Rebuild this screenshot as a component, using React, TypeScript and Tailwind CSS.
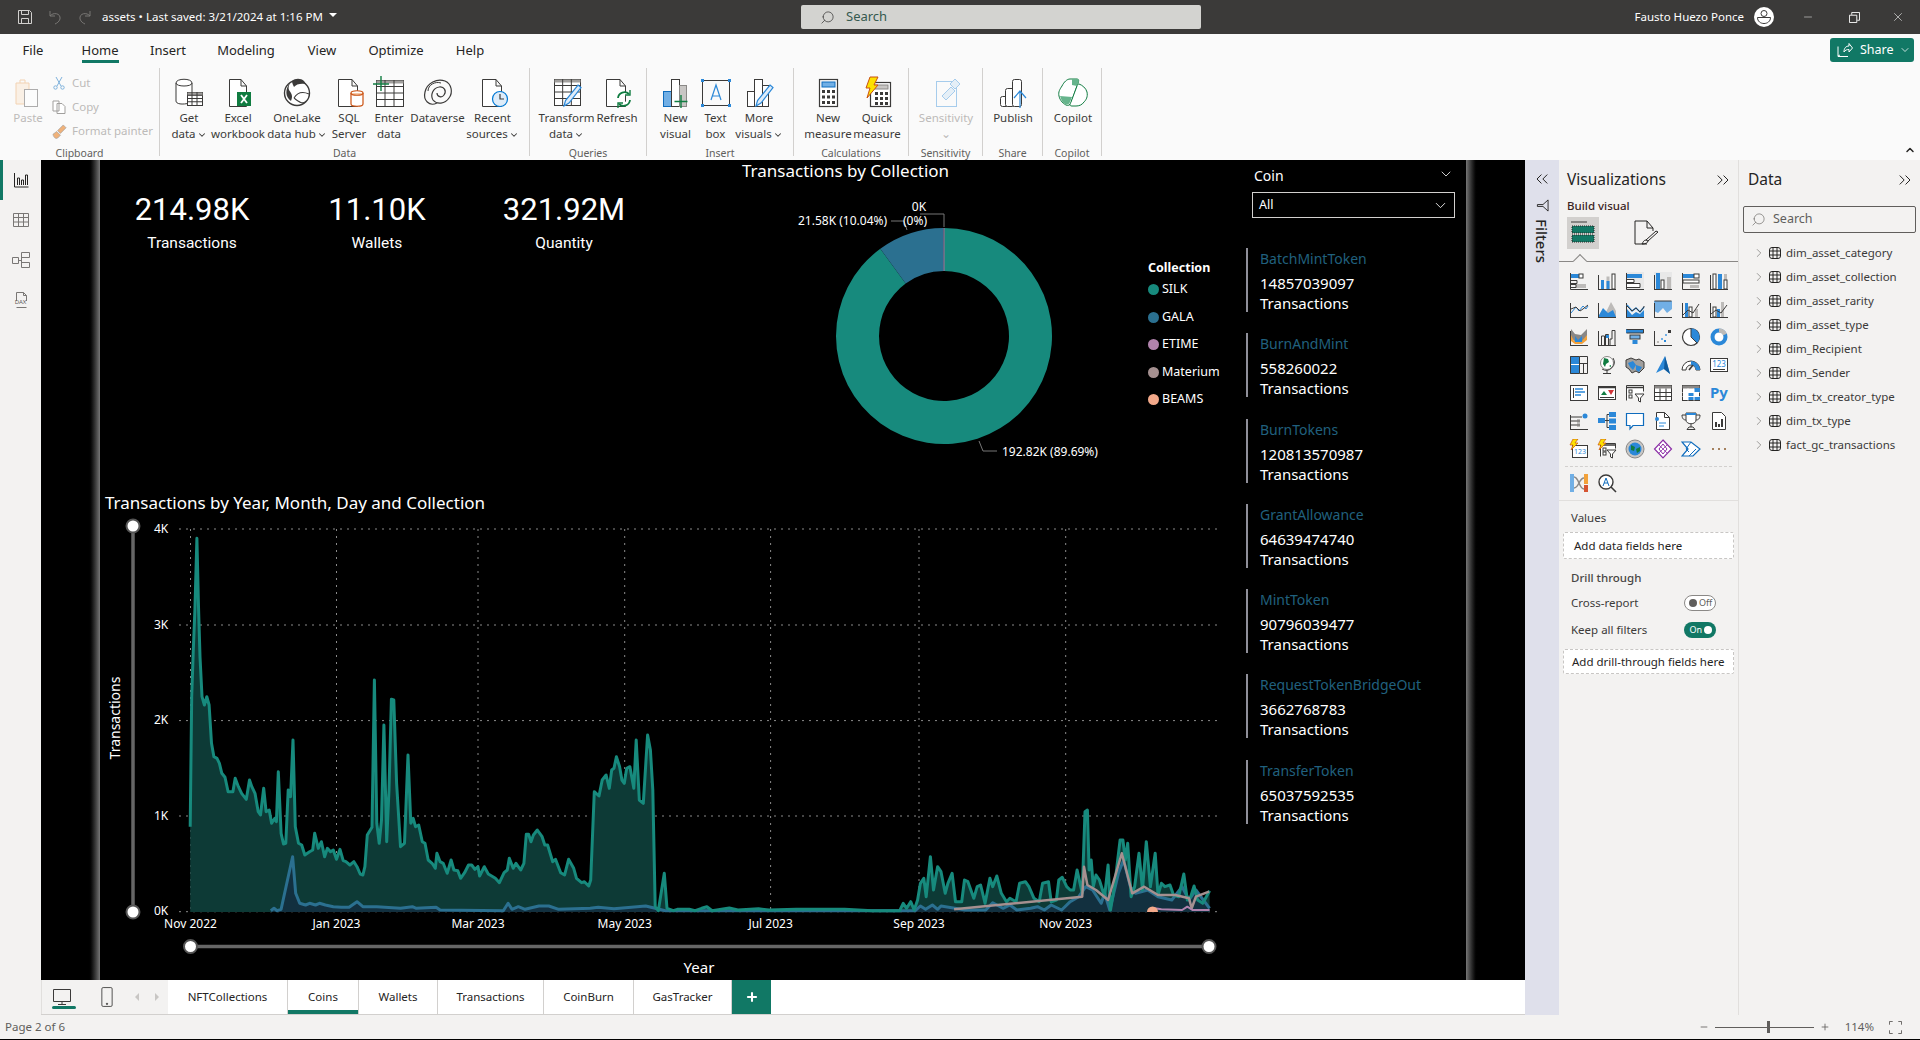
import React from "react";
import {
  ChevronDown,
  ChevronRight,
  ChevronUp,
  ChevronsLeft,
  ChevronsRight,
  Minus,
  Plus,
  Search,
  X,
} from "lucide-react";

type Pt = [number, number];

// traced from the report, page coordinates after conversion
const a = (p: number[]): Pt[] => {
  const out: Pt[] = [];
  for (let i = 0; i < p.length; i += 2) out.push([100 + p[i] / 2.529, 490 + p[i + 1] / 3]);
  return out;
};
const b = (p: number[]): Pt[] => {
  const out: Pt[] = [];
  for (let i = 0; i < p.length; i += 2) out.push([700 + p[i] / 2.904, 600 + p[i + 1] / 3]);
  return out;
};
const str = (p: Pt[]) => p.map((q) => `${q[0].toFixed(1)},${q[1].toFixed(1)}`).join(" ");
const area = (p: Pt[]) => `${p[0][0].toFixed(1)},912 ${str(p)} ${p[p.length - 1][0].toFixed(1)},912`;

const silk: Pt[] = [
  ...a([
    228, 1010, 232, 620, 236, 480, 240, 360, 245, 145, 249, 350, 253, 500, 258, 620, 264, 645, 270, 620, 276, 645, 282,
    760, 288, 800, 296, 805, 302, 820, 308, 850, 316, 862, 324, 905, 336, 905, 342, 865, 350, 890, 358, 910, 370, 928,
    378, 870, 384, 890, 392, 910, 400, 965, 406, 975, 414, 895, 420, 965, 428, 960, 434, 1000, 442, 985, 446, 995, 451,
    845, 458, 1030, 464, 1062, 470, 1060, 476, 900, 482, 920, 488, 750, 494, 1010, 502, 1060, 510, 1065, 518, 1095, 530,
    1085, 538, 1080, 543, 1030, 552, 1075, 560, 1055, 568, 1100, 575, 1075, 583, 1085, 590, 1080, 598, 1108, 607, 1078,
    615, 1112, 622, 1115, 632, 1125, 642, 1115, 650, 1130, 658, 1152, 665, 1155, 670, 1130, 676, 1035, 688, 1012, 694,
    570, 700, 1000, 706, 1060, 712, 990, 718, 705, 725, 1055, 731, 900, 737, 628, 743, 630, 750, 880, 760, 1070, 770,
    1060, 779, 795, 786, 1000, 792, 985, 798, 1010, 806, 1005, 815, 1055, 822, 1060, 830, 1110, 840, 1120, 848, 1135,
    852, 1090, 860, 1115, 868, 1120, 878, 1150, 888, 1110, 895, 1140, 905, 1142, 912, 1165, 922, 1148, 932, 1125, 940,
    1125, 948, 1138, 956, 1130, 960, 1158, 972, 1130, 982, 1152, 1000, 1165, 1010, 1178, 1022, 1148, 1030, 1140, 1035,
    1105, 1045, 1135, 1052, 1120, 1064, 1140, 1072, 1120, 1078, 1033, 1084, 1033, 1090, 1055, 1096, 1035, 1106, 1020,
    1118, 1040, 1125, 1065, 1132, 1065, 1145, 1115, 1152, 1108, 1165, 1148, 1175, 1155, 1185, 1108, 1198, 1135, 1205,
    1165, 1218, 1178, 1225, 1175, 1236, 1188, 1241, 1170, 1250, 905, 1262, 918, 1270, 870, 1280, 855, 1288, 895, 1294,
    840, 1300, 835, 1306, 800, 1314, 830, 1320, 870, 1326, 880, 1332, 835, 1340, 830, 1350, 895, 1356, 750, 1364, 930,
    1374, 940, 1385, 735, 1392, 780, 1398, 900, 1404, 1250, 1412, 1262, 1427, 1150, 1434, 1255, 1450, 1262, 1460, 1258,
    1490, 1258, 1505, 1262,
  ]),
  ...b([
    5, 925, 20, 920, 35, 932, 85, 924, 110, 930, 170, 926, 200, 930, 280, 928, 340, 928, 420, 928, 500, 932, 580, 932,
    590, 910, 600, 925, 612, 905, 622, 930, 632, 900, 640, 850, 650, 835, 657, 890, 669, 770, 678, 870, 690, 800, 700,
    815, 712, 880, 720, 850, 732, 820, 742, 905, 760, 905, 768, 840, 778, 845, 795, 895, 805, 860, 815, 855, 828, 910,
    842, 835, 850, 860, 862, 828, 875, 880, 890, 905, 900, 895, 918, 905, 928, 850, 945, 845, 955, 860, 970, 895, 985,
    905, 995, 850, 1012, 845, 1020, 905, 1035, 900, 1042, 840, 1052, 832, 1065, 860, 1075, 870, 1085, 870, 1095, 810,
    1110, 880, 1118, 635, 1125, 630, 1130, 810, 1136, 780, 1142, 860, 1150, 825, 1160, 840, 1175, 890, 1185, 795, 1192,
    930, 1205, 850, 1220, 720, 1228, 720, 1235, 780, 1242, 730, 1252, 890, 1262, 860, 1275, 760, 1285, 870, 1296, 725,
    1308, 860, 1322, 760, 1330, 885, 1340, 850, 1350, 860, 1365, 855, 1375, 885, 1390, 890, 1405, 822, 1415, 900, 1425,
    890, 1435, 858, 1445, 900, 1460, 910, 1480, 872,
  ]),
];

const gala: Pt[] = [
  ...a([
    432, 1262, 440, 1255, 448, 1262, 458, 1258, 487, 1100, 495, 1210, 505, 1240, 520, 1245, 530, 1240, 545, 1245, 555,
    1240, 570, 1245, 590, 1250, 610, 1252, 630, 1252, 650, 1235, 665, 1250, 700, 1250, 760, 1255, 790, 1250, 800, 1255,
    850, 1252, 860, 1260, 1020, 1262, 1032, 1240, 1042, 1258, 1058, 1250, 1075, 1258, 1110, 1248, 1135, 1248, 1160, 1258,
    1240, 1255, 1260, 1252, 1300, 1256, 1380, 1248, 1404, 1255, 1430, 1262,
  ]),
  ...b([
    625, 932, 640, 918, 655, 928, 675, 915, 690, 928, 700, 918, 740, 925, 770, 930, 830, 930, 850, 908, 880, 925, 900,
    915, 920, 930, 960, 925, 980, 920, 1000, 930, 1020, 915, 1050, 930, 1075, 905, 1100, 890, 1120, 860, 1140, 870, 1165,
    910, 1175, 880, 1190, 930, 1215, 820, 1230, 780, 1250, 860, 1265, 880, 1300, 870, 1330, 890, 1370, 900, 1400, 860,
    1420, 900, 1440, 870, 1480, 925,
  ]),
];

const materium = b([
  738, 928, 1110, 890, 1115, 800, 1125, 855, 1150, 870, 1185, 900, 1225, 760, 1255, 880, 1290, 860, 1330, 885, 1380, 885,
  1420, 895, 1428, 925, 1440, 890, 1478, 875,
]);
const etime = b([1320, 925, 1340, 928, 1400, 930, 1415, 920, 1430, 930, 1480, 930]);

const Ink = "#3b3a39";

const Ic32 = ({ children, faded }: { children: React.ReactNode; faded?: boolean }) => (
  <svg
    viewBox="0 0 32 32"
    className={faded ? "w-[32px] h-[32px] opacity-40" : "w-[32px] h-[32px]"}
    fill="none"
    stroke={Ink}
    strokeWidth="1"
  >
    {children}
  </svg>
);

const Doc = ({ x = 8, w = 16 }: { x?: number; w?: number }) => (
  <path d={`M${x + 0.5} 30.5V3.5H${x + w - 6}L${x + w - 0.5} 10V30.5Z M${x + w - 6} 3.5V10H${x + w - 0.5}`} fill="#fff" />
);

const Grid3 = ({ x, y, w, h, head }: { x: number; y: number; w: number; h: number; head?: boolean }) => (
  <g>
    <rect x={x + 0.5} y={y + 0.5} width={w} height={h} fill="#fff" />
    {head && <rect x={x + 0.5} y={y + 0.5} width={w} height={3} fill="#a19f9d" stroke="none" />}
    {[1, 2, 3].map((i) => (
      <line key={"h" + i} x1={x} x2={x + w} y1={y + (h * i) / 4} y2={y + (h * i) / 4} />
    ))}
    {[1, 2].map((i) => (
      <line key={"v" + i} y1={y} y2={y + h} x1={x + (w * i) / 3} x2={x + (w * i) / 3} />
    ))}
  </g>
);

const Pencil = () => (
  <path d="M27 9l3 2.5L18 27l-5 3 1.5-5.5Z" fill="#deecf9" stroke="#2b88d8" strokeWidth="1.2" />
);

const GetDataIcon = () => (
  <Ic32>
    <path d="M3 7c0-5 16-5 16 0v20h-2c-8 2-14 1-14-2Z" fill="#fff" />
    <path d="M3 7c0 4 16 4 16 0" />
    <Grid3 x={14} y={16} w={15} h={13} head />
  </Ic32>
);
const ExcelIcon = () => (
  <Ic32>
    <Doc x={7} w={18} />
    <rect x="15" y="16" width="14" height="14" fill="#107c41" stroke="none" />
    <path d="M19 19l6 8M25 19l-6 8" stroke="#fff" strokeWidth="1.8" />
  </Ic32>
);
const OneLakeIcon = () => (
  <Ic32>
    <circle cx="16" cy="17" r="12.500" fill="#fff" strokeWidth="1.4" />
    <path d="M9 7c-5 6-5 14 1 18 2-5 1-7-2-11-1-2 0-5 1-7Z" fill="#3b3a39" stroke="none" />
    <path d="M11 5c3-3 9-3 12 0l2 3c-5-1-10 0-12 3-1-2-2-4-2-6Z" fill="#3b3a39" stroke="none" />
    <path d="M13 22c3-5 8-7 15-4M13 22c5 4 9 7 12 3" strokeWidth="1.1" />
  </Ic32>
);
const SqlIcon = () => (
  <Ic32>
    <Doc x={5} w={20} />
    <path d="M18 17c0-3 12-3 12 0v11c0 3-12 3-12 0Z" fill="#fff" stroke="#ca5010" strokeWidth="1.2" />
    <path d="M18 17c0 3 12 3 12 0" fill="#f7c8a5" stroke="#ca5010" strokeWidth="1.2" />
  </Ic32>
);
const EnterIcon = () => (
  <Ic32>
    <Grid3 x={3} y={4} w={27} h={26} head />
    <path d="M8 0v15M0 8h16" stroke="#107c41" strokeWidth="1.4" />
  </Ic32>
);
const DataverseIcon = () => (
  <Ic32>
    <path d="M15 27C7 31 1 24 3 16 5 7 15 2 23 5c7 3 8 12 4 17-4 6-12 7-16 2-3-5 0-12 6-13 5-1 8 4 5 8-2 3-7 2-7-2" strokeWidth="1.2" />
    <path d="M6 15c0-6 7-10 13-8" strokeWidth="1" />
  </Ic32>
);
const RecentIcon = () => (
  <Ic32>
    <Doc x={5} w={20} />
    <circle cx="23" cy="23" r="7.500" fill="#deecf9" stroke="#0078d4" strokeWidth="1.2" />
    <path d="M23 18v5h4" stroke={Ink} strokeWidth="1.2" />
  </Ic32>
);
const TransformIcon = () => (
  <Ic32>
    <Grid3 x={3} y={3} w={26} h={26} head />
    <Pencil />
  </Ic32>
);
const RefreshIcon = () => (
  <Ic32>
    <Doc x={5} w={20} />
    <path d="M17 22a6.500 6.500 0 0 1 11-4M29 24a6.500 6.500 0 0 1-11 4" stroke="#107c41" strokeWidth="1.800" fill="#fff" />
    <path d="M29 14v5h-5M17 32v-5h5" stroke="#107c41" strokeWidth="1.400" />
  </Ic32>
);
const NewVisualIcon = () => (
  <Ic32>
    <rect x="3.500" y="15.500" width="8" height="15" fill="#71afe5" stroke="#0f6cbd" />
    <rect x="11.500" y="3.500" width="8" height="27" fill="#fff" />
    <rect x="19.500" y="9.500" width="7" height="21" fill="#c8c6c4" stroke="#8a8886" />
    <path d="M21 19v13M14.500 25.500h13" stroke="#107c41" strokeWidth="1.400" />
  </Ic32>
);
const TextBoxIcon = () => (
  <Ic32>
    <rect x="2.500" y="4.500" width="27" height="25" />
    {[
      [2.5, 4.5],
      [29.5, 4.5],
      [2.5, 29.5],
      [29.5, 29.5],
    ].map(([x, y], i) => (
      <rect key={i} x={x - 1.5} y={y - 1.5} width="3" height="3" fill="#2b88d8" stroke="none" />
    ))}
    <path d="M11 24l5-15 5 15M12.500 20h7" stroke="#2b88d8" strokeWidth="1.200" />
  </Ic32>
);
const MoreVisualsIcon = () => (
  <Ic32>
    <rect x="4.500" y="15.500" width="7" height="15" fill="#fff" />
    <rect x="11.500" y="3.500" width="8" height="27" fill="#fff" />
    <rect x="19.500" y="9.500" width="6" height="21" fill="#fff" />
    <Pencil />
  </Ic32>
);
const Calculator = ({ x }: { x: number }) => (
  <g>
    <rect x={x + 0.5} y="3.500" width="18" height="27" fill="#fff" strokeWidth="1.200" />
    <rect x={x + 3} y="6" width="13" height="5" fill="#71afe5" stroke="#0f6cbd" />
    {[0, 1, 2].map((r) =>
      [0, 1, 2].map((c) => (
        <rect key={`${r}${c}`} x={x + 3 + c * 5} y={14 + r * 5.5} width="3" height="3" fill="#3b3a39" stroke="none" />
      )),
    )}
  </g>
);
const NewMeasureIcon = () => (
  <Ic32>
    <Calculator x={7} />
  </Ic32>
);
const QuickMeasureIcon = () => (
  <Ic32>
    <rect x="9.500" y="6.500" width="20" height="24" fill="#fff" strokeWidth="1.200" />
    <rect x="14" y="9" width="13" height="4" fill="#c8c6c4" stroke="#8a8886" />
    {[0, 1, 2].map((r) =>
      [0, 1, 2].map((c) => (
        <rect key={`${r}${c}`} x={14 + c * 5} y={16 + r * 5} width="3" height="3" fill="#3b3a39" stroke="none" />
      )),
    )}
    <path d="M9 1h8l-4 8h4L6 22l3-10H5Z" fill="#fce100" stroke="#ca5010" />
  </Ic32>
);
const SensitivityIcon = () => (
  <Ic32 faded>
    <rect x="6.500" y="5.500" width="20" height="25" stroke="#2b88d8" />
    <path d="M12 20l9-9 4 4-9 9Z" fill="#c7e0f4" stroke="#2b88d8" />
    <path d="M20 8l5-5 5 5-5 5Z" fill="#c7e0f4" stroke="#2b88d8" />
  </Ic32>
);
const PublishIcon = () => (
  <Ic32>
    <rect x="3.500" y="20.500" width="8" height="10" rx="2" fill="#fff" />
    <rect x="8.500" y="12.500" width="9" height="18" rx="2" fill="#fff" />
    <rect x="15.500" y="3.500" width="9" height="27" rx="2" fill="#fff" />
    <path d="M23 32V15M17 22l6-7 6 7" stroke="#2b88d8" strokeWidth="1.200" fill="none" />
  </Ic32>
);
const CopilotIcon = () => (
  <Ic32>
    <path d="M13 3h7c2 0 2 2 1 4l-7 20c-1 2-3 3-5 2-2-1-6-4-7-9-1-4 1-7 3-10 2-4 5-7 8-7Z" fill="#fff" stroke="#107c41" />
    <path d="M22 8c3 1 7 4 8 8 1 5-1 8-3 10-2 3-5 4-8 4h-4c-3 0-2-2-1-4l6-16c0-1 1-2 2-2Z" fill="#fff" stroke="#107c41" />
    <path d="M15 3h5c2 0 2 2 1 4l-1 3-5-1Z" fill="#66b48c" stroke="none" />
    <path d="M3 20l12 1-2 5c-1 3-4 3-5 2-2-1-4-4-5-8Z" fill="#66b48c" stroke="none" />
  </Ic32>
);

const RibbonBtn = ({
  w,
  icon,
  lines,
  caret,
  muted,
}: {
  w: string;
  icon: React.ReactNode;
  lines: string[];
  caret?: boolean;
  muted?: boolean;
}) => (
  <div className={`${w} flex flex-col items-center pt-[8px] shrink-0`}>
    <div className="h-[32px] mb-[2px] flex items-center justify-center">{icon}</div>
    {lines.map((l, i) => (
      <div key={i} className={`leading-[16px] whitespace-nowrap ${muted ? "text-[#bdbbb9]" : "text-[#3b3a39]"}`}>
        {l}
        {caret && i === lines.length - 1 && <ChevronDown className="inline w-[10px] h-[10px] ml-[1px]" strokeWidth={2.5} />}
      </div>
    ))}
  </div>
);

const Group = ({
  width,
  pad,
  label,
  children,
}: {
  width: string;
  pad: string;
  label: string;
  children: React.ReactNode;
}) => (
  <div className={`${width} shrink-0 flex flex-col border-r border-[#d2d0ce] h-[88px]`}>
    <div className={`${pad} flex h-[78px] shrink-0`}>{children}</div>
    <div className="h-[10px] text-center text-[10.5px] leading-[14px] text-[#605e5c] whitespace-nowrap">{label}</div>
  </div>
);

// visualization gallery, 20px drawings
const S = ({ children }: { children: React.ReactNode }) => (
  <svg viewBox="0 0 20 20" className="w-[20px] h-[20px]" fill="none" stroke={Ink} strokeWidth="1">
    {children}
  </svg>
);
const B = "#2b88d8";
const G = "#bdbbb9";
const axisL = <path d="M1.500 2v16.500H19" />;
const axisB = <path d="M1 18.500h18M1.500 4v14.500" />;

const gallery: React.ReactNode[] = [
  <S key="1">
    {axisL}
    <rect x="2" y="3" width="8" height="4" fill={B} stroke="none" />
    <rect x="10" y="3" width="4" height="4" fill="#fff" stroke={Ink} />
    <path d="M2 9.500h6v3H2" />
    <rect x="7" y="13" width="10" height="4" fill={G} stroke="none" />
    <path d="M2 13.500h5v3H2" />
  </S>,
  <S key="2">
    {axisB}
    <rect x="4" y="9" width="3" height="9" fill={B} stroke="none" />
    <rect x="9.500" y="5.500" width="3" height="12.500" fill={G} stroke="none" />
    <rect x="15" y="3" width="3" height="15" fill="#fff" stroke={Ink} />
    <rect x="9.500" y="10" width="3" height="8" fill={B} stroke="none" />
  </S>,
  <S key="3">
    <rect x="1" y="1" width="18" height="18" fill="#e8e8e8" stroke="none" />
    <rect x="2" y="3" width="15" height="4" fill={B} stroke="none" />
    <path d="M2 8.500h7v3H2M2 12.500h13v4H2" fill="#fff" />
    {axisL}
  </S>,
  <S key="4">
    <rect x="1" y="1" width="18" height="18" fill="#e8e8e8" stroke="none" />
    <rect x="3" y="2" width="4" height="16" fill={B} stroke="none" />
    <rect x="8" y="9" width="3" height="9" fill="#fff" stroke={Ink} />
    <rect x="14" y="6" width="4" height="12" fill={G} stroke="none" />
    {axisB}
  </S>,
  <S key="5">
    {axisL}
    <rect x="2" y="3" width="11" height="4" fill={B} stroke="none" />
    <rect x="13" y="3" width="5" height="4" fill="#fff" stroke={Ink} />
    <rect x="2" y="9" width="16" height="3" fill="#fff" stroke={Ink} />
    <rect x="9" y="14" width="9" height="3" fill={G} stroke="none" />
  </S>,
  <S key="6">
    {axisB}
    <rect x="4" y="3" width="3" height="15" fill="#fff" stroke={Ink} />
    <rect x="9" y="3" width="4" height="15" fill={B} stroke="none" />
    <rect x="15" y="3" width="3" height="6" fill={G} stroke="none" />
    <rect x="15" y="9" width="3" height="9" fill="#fff" stroke={Ink} />
  </S>,
  <S key="7">
    {axisB}
    <path d="M2 14l5-6 3 4 4-5 3 3 2-3" stroke={B} />
    <path d="M2 10l5-2 4 4 3-2 5-4" />
  </S>,
  <S key="8">
    <path d="M1 18l5-8 3 3 5-10 5 9v6Z" fill={G} stroke="none" />
    <path d="M1 18l5-9 5 5 5-3 3 7Z" fill={B} stroke="none" />
    {axisB}
  </S>,
  <S key="9">
    {axisB}
    <path d="M2 6l5 6 4-3 4 4 4-5" stroke={B} strokeWidth="1.400" />
    <path d="M2 10l5 6 4-3 4 2 4-4v7H2Z" fill={B} stroke="none" />
    <path d="M2 7l5 5 4-3 4 4 4-5v-1" fill="none" stroke={Ink} />
  </S>,
  <S key="10">
    <path d="M1 2h18v8l-5 4-4-5-5 5-4-2Z" fill="#71afe5" stroke="none" />
    <path d="M1.500 2h17" stroke={Ink} />
    {axisB}
  </S>,
  <S key="11">
    {axisB}
    <rect x="4" y="4" width="3" height="14" fill={B} stroke="none" />
    <rect x="8" y="8" width="3" height="10" fill="#fff" stroke={Ink} />
    <rect x="14" y="10" width="3" height="8" fill={G} stroke="none" />
    <path d="M2 16l5-5 5 3 6-9" />
  </S>,
  <S key="12">
    {axisB}
    <rect x="4" y="8" width="3" height="10" fill="#fff" stroke={Ink} />
    <rect x="8" y="10" width="3" height="8" fill={B} stroke="none" />
    <rect x="12" y="3" width="3" height="15" fill={G} stroke="none" />
    <path d="M2 15l5-4 5 3 6-8" />
  </S>,
  <S key="13">
    <path d="M2 2l4 5 6 1 6-6v8l-4 5-6 1-6-5Z" fill="#8a8886" stroke="none" />
    <path d="M2 8l3 6h8l5-6v5l-5 4H6l-4-3Z" fill="#f2a13a" stroke="none" />
    <path d="M6 9l3 4 4-4v6H6Z" fill={B} stroke="none" />
    {axisB}
  </S>,
  <S key="14">
    {axisB}
    <path d="M4.500 18v-9h3v9M8.500 18V7.500h3v10.500M13 18V12h2V3.500h3V18" />
    <rect x="9" y="8" width="3" height="3" fill={B} stroke="none" />
  </S>,
  <S key="15">
    <rect x="1" y="2" width="18" height="4" fill={B} stroke="none" />
    <path d="M1.500 2.500h17v3.500h-17" />
    <rect x="5" y="8" width="10" height="4" fill="#71afe5" stroke={Ink} />
    <rect x="7.500" y="13" width="5" height="4" fill={B} stroke="none" />
  </S>,
  <S key="16">
    {axisB}
    <rect x="4" y="14" width="2" height="2" fill={G} stroke="none" />
    <rect x="8" y="11" width="2" height="2" fill="#71afe5" stroke="none" />
    <rect x="11" y="13" width="2" height="2" fill={B} stroke="none" />
    <rect x="12" y="7" width="2" height="2" fill="#71afe5" stroke="none" />
    <rect x="15" y="3" width="3" height="3" fill={Ink} stroke="none" />
  </S>,
  <S key="17">
    <circle cx="10" cy="10" r="8.500" fill="#fff" strokeWidth="1.200" />
    <path d="M10 10V1.500a8.500 8.500 0 0 1 6 14.500Z" fill={B} stroke="none" />
    <path d="M10 1.500V10l6 6" />
  </S>,
  <S key="18">
    <circle cx="10" cy="10" r="6.500" stroke={B} strokeWidth="4" />
    <path d="M10 3.500a6.500 6.500 0 0 1 6 4" stroke={G} strokeWidth="4" />
    <circle cx="10" cy="10" r="4" fill="#fff" stroke="none" />
  </S>,
  <S key="19">
    <rect x="1" y="1" width="9" height="18" fill={B} stroke="none" />
    <rect x="1" y="9" width="9" height="1" fill="#fff" stroke="none" />
    <path d="M10.500 1.500h8v17h-8M10.500 8.500h8M14.500 8.500v10" />
    <path d="M1.500 1.500h9v17h-9Z" />
  </S>,
  <S key="20">
    <circle cx="10" cy="8" r="6.500" fill="#fff" stroke="#8a8886" />
    <path d="M7 3l4 1 1 3-3 2-1 3-2-3ZM12 11l2-1v2Z" fill="#107c41" stroke="none" />
    <path d="M16 3a8 8 0 0 1-11 11M10 15v3M6 18.500h8" />
  </S>,
  <S key="21">
    <path d="M1 5l5-2 5 2 3-1 5 3v6l-5 5-3-2-4 2-3-4-3-2Z" fill="#a19f9d" stroke={Ink} />
    <path d="M3 8l5-2 3 4-3 5-3-3Z" fill={B} stroke="none" />
    <path d="M11 10l6 2-3 5-3-2Z" fill={B} stroke="none" />
  </S>,
  <S key="22">
    <path d="M12 1l5 18-6-5-8 4Z" fill="#2b88d8" stroke="none" />
    <path d="M12 1l-1 13 6 5Z" fill="#0f5a9c" stroke="none" />
  </S>,
  <S key="23">
    <path d="M1 15a9 9 0 0 1 18 0h-4a5 5 0 0 0-10 0Z" fill="#fff" />
    <path d="M10 6a9 9 0 0 1 9 9h-4a5 5 0 0 0-5-5Z" fill={B} stroke="none" />
    <path d="M8 15l4-5" strokeWidth="1.600" />
  </S>,
  <S key="24">
    <rect x="1.500" y="3.500" width="17" height="13" fill="#fff" />
    <path d="M4 14.500h12" />
    <text x="10" y="12" textAnchor="middle" fontSize="8" fill={B} stroke="none">
      123
    </text>
  </S>,
  <S key="25">
    <rect x="1.500" y="2.500" width="17" height="15" fill="#fff" />
    <path d="M4.500 5v10" />
    <path d="M6 6h8M6 9h10M6 12h6" stroke={B} strokeWidth="1.400" />
  </S>,
  <S key="26">
    <rect x="1.500" y="3.500" width="17" height="13" fill="#fff" />
    <path d="M1 4.500h18" strokeWidth="1.500" />
    <path d="M4 12l3-4 3 4Z" fill="#107c41" stroke="none" />
    <path d="M11 7h6l-3 5Z" fill="#d13438" stroke="none" />
    <path d="M3 14.500h14" />
  </S>,
  <S key="27">
    <path d="M1.500 17.500v-15h17v6" fill="#fff" />
    <path d="M1 4.500h18" strokeWidth="1.500" />
    <rect x="4" y="7" width="3" height="3" fill="#fff" />
    <rect x="4" y="12" width="3" height="3" fill="#fff" />
    <path d="M10 11h9l-3.500 4v4l-2-1v-3Z" fill="#fff" />
  </S>,
  <S key="28">
    <rect x="1.500" y="2.500" width="17" height="15" fill="#fff" />
    <rect x="1.500" y="2.500" width="17" height="3" fill="#8a8886" stroke="none" />
    <path d="M1.500 9.500h17M1.500 13.500h17M7 5.500v12M13 5.500v12" />
  </S>,
  <S key="29">
    <rect x="1.500" y="2.500" width="17" height="15" fill="#fff" />
    <rect x="1.500" y="2.500" width="17" height="3" fill="#8a8886" stroke="none" />
    <rect x="7" y="9" width="6" height="4" fill={B} stroke="none" />
    <rect x="13" y="5" width="6" height="4" fill={B} stroke="none" />
    <rect x="7" y="13" width="12" height="4" fill={B} stroke="none" />
    <path d="M1.500 9.500h17M1.500 13.500h17M7 5.500v12M13 5.500v12" stroke="#fff" />
  </S>,
  <S key="30">
    <text x="10" y="15" textAnchor="middle" fontSize="15" fontWeight="700" fill="#2b88d8" stroke="none">
      Py
    </text>
  </S>,
  <S key="31">
    {axisB}
    <path d="M2 6h11M2 10h6M2 14h6" />
    <circle cx="16" cy="5" r="2.500" fill={B} stroke="none" />
    <rect x="8" y="8.500" width="3" height="3" fill="#8a8886" stroke="none" />
    <rect x="8" y="12.500" width="3" height="3" fill="#8a8886" stroke="none" />
  </S>,
  <S key="32">
    <rect x="1" y="7" width="7" height="5" fill={B} stroke="none" />
    <rect x="12" y="1" width="7" height="5" fill={B} stroke="none" />
    <rect x="12" y="7.500" width="7" height="5" fill={B} stroke="none" />
    <rect x="12" y="14" width="7" height="5" fill={B} stroke="none" />
    <path d="M8 9.500h4M10 3.500v13M10 3.500h2M10 16.500h2" />
  </S>,
  <S key="33">
    <path d="M1.500 2.500h17v12H8l-3 3.500v-3.500H1.500Z" fill="#fff" stroke="#0f6cbd" strokeWidth="1.200" />
  </S>,
  <S key="34">
    <path d="M3.500 1.500h8l5 5v12h-13Z" fill="#fff" />
    <path d="M11.500 1.500v5h5" />
    <circle cx="4" cy="8" r="2" fill={B} stroke="none" />
    <path d="M6 12h7M6 15h5" stroke={B} />
  </S>,
  <S key="35">
    <path d="M5 2h10v7c0 5-10 5-10 0Z" fill="#fff" />
    <rect x="5" y="2" width="10" height="2" fill={B} stroke="none" />
    <path d="M5 4H1c0 4 2 5 4 5M15 4h4c0 4-2 5-4 5M10 13v3M6 18.500h8l-2-2.500H8Z" />
  </S>,
  <S key="36">
    <path d="M3.500 1.500h9l4 4v13h-13Z" fill="#fff" />
    <rect x="6" y="11" width="2" height="5" fill="#3b3a39" stroke="none" />
    <rect x="9" y="13" width="2" height="3" fill="#3b3a39" stroke="none" />
    <rect x="12" y="8" width="2" height="8" fill="#3b3a39" stroke="none" />
  </S>,
  <S key="37">
    <rect x="3.500" y="6.500" width="15" height="12" fill="#fff" />
    <text x="11" y="15" textAnchor="middle" fontSize="7" fill={B} stroke="none">
      123
    </text>
    <path d="M4 0h5L6 4h3L2 11l2-5H1Z" fill="#fce100" stroke="#ca5010" strokeWidth="0.700" />
  </S>,
  <S key="38">
    <path d="M3.500 17.500V4.500h15v5" fill="#fff" />
    <path d="M3 6h16" strokeWidth="1.500" />
    <rect x="6" y="9" width="3" height="3" fill="#fff" />
    <rect x="6" y="13" width="3" height="3" fill="#fff" />
    <path d="M10 11h9l-3.500 4v4l-2-1v-3Z" fill="#fff" />
    <path d="M4 0h5L6 4h3L2 11l2-5H1Z" fill="#fce100" stroke="#ca5010" strokeWidth="0.700" />
  </S>,
  <S key="39">
    <circle cx="10" cy="10" r="9" fill="#c8c6c4" stroke="#8a8886" />
    <circle cx="10" cy="10" r="6.500" fill="#2b88d8" stroke="none" />
    <path d="M6 6l4 2-1 4-3-1ZM11 10l4-2 0 4-3 2Z" fill="#107c41" stroke="none" />
  </S>,
  <S key="40">
    <path d="M10 1l8.500 9-8.500 9-8.500-9Z" fill="#fff" stroke="#8a2da5" strokeWidth="1.200" />
    <path d="M10 5l4 5-4 5-4-5Z" fill="#fff" stroke="#8a2da5" />
    <path d="M6 6l8 8M14 6l-8 8" stroke="#8a2da5" strokeWidth="0.800" />
  </S>,
  <S key="41">
    <path d="M1 3h9l9 7-7 7H1l6-7Z" fill="#fff" stroke="#0f6cbd" strokeWidth="1.200" />
    <path d="M10 3l-5 7 3 3M15 10l-7 7" stroke="#0f6cbd" />
  </S>,
  <S key="42">
    <circle cx="4" cy="10" r="1" fill="#8a5a2b" stroke="none" />
    <circle cx="10" cy="10" r="1" fill="#8a5a2b" stroke="none" />
    <circle cx="16" cy="10" r="1" fill="#8a5a2b" stroke="none" />
  </S>,
];

const Dashed = ({ children, pl }: { children: string; pl: string }) => (
  <div
    className={`mx-[4px] bg-white border border-dashed border-[#c8c6c4] rounded-[2px] ${pl} whitespace-nowrap text-[#252423] text-[11.5px] flex items-center`}
  >
    {children}
  </div>
);

const fields = [
  "dim_asset_category",
  "dim_asset_collection",
  "dim_asset_rarity",
  "dim_asset_type",
  "dim_Recipient",
  "dim_Sender",
  "dim_tx_creator_type",
  "dim_tx_type",
  "fact_gc_transactions",
];

const cards = [
  ["BatchMintToken", "14857039097"],
  ["BurnAndMint", "558260022"],
  ["BurnTokens", "120813570987"],
  ["GrantAllowance", "64639474740"],
  ["MintToken", "90796039477"],
  ["RequestTokenBridgeOut", "3662768783"],
  ["TransferToken", "65037592535"],
];

const legend = [
  ["SILK", "bg-[#178a7d]"],
  ["GALA", "bg-[#2b7090]"],
  ["ETIME", "bg-[#b183ad]"],
  ["Materium", "bg-[#a59090]"],
  ["BEAMS", "bg-[#f3a98a]"],
];

const tabs = [
  ["NFTCollections", "w-[120px]"],
  ["Coins", "w-[71px]"],
  ["Wallets", "w-[79px]"],
  ["Transactions", "w-[106px]"],
  ["CoinBurn", "w-[90px]"],
  ["GasTracker", "w-[98px]"],
];

const ribbonTabs = [
  ["File", "w-[66px]"],
  ["Home", "w-[68px]"],
  ["Insert", "w-[68px]"],
  ["Modeling", "w-[88px]"],
  ["View", "w-[64px]"],
  ["Optimize", "w-[84px]"],
  ["Help", "w-[64px]"],
];

const arc = (cx: number, cy: number, r0: number, r1: number, from: number, to: number) => {
  const p = (r: number, t: number) => [cx + r * Math.sin(t), cy - r * Math.cos(t)];
  const [x0, y0] = p(r1, from);
  const [x1, y1] = p(r1, to);
  const [x2, y2] = p(r0, to);
  const [x3, y3] = p(r0, from);
  const large = Math.abs(to - from) > Math.PI ? 1 : 0;
  return `M${x0} ${y0}A${r1} ${r1} 0 ${large} 1 ${x1} ${y1}L${x2} ${y2}A${r0} ${r0} 0 ${large} 0 ${x3} ${y3}Z`;
};

const DonutChart = () => {
  const start = -0.1004 * 2 * Math.PI;
  return (
    <svg viewBox="658 182 488 290" className="w-[488px] h-[290px] shrink-0" fontSize="12" fill="#fff">
      <path d={arc(944, 336, 65, 108, 0.002, 2 * Math.PI + start)} fill="#178a7d" />
      <path d={arc(944, 336, 65, 108, start, -0.004)} fill="#2b7090" />
      <path d="M944 228v43" stroke="#b183ad" strokeWidth="1" />
      <path d="M891 221h13l3 9M920 214h24v13" fill="none" stroke="#777" />
      <path d="M979 441l4 10h14" fill="none" stroke="#777" />
      <text x="919" y="211" textAnchor="middle">
        0K
      </text>
      <text x="915" y="225" textAnchor="middle">
        (0%)
      </text>
      <text x="798" y="225">21.58K (10.04%)</text>
      <text x="1002" y="456">192.82K (89.69%)</text>
    </svg>
  );
};

const TrendChart = () => {
  const xs = [
    [190.5, "Nov 2022"],
    [336.5, "Jan 2023"],
    [478, "Mar 2023"],
    [624.7, "May 2023"],
    [770.6, "Jul 2023"],
    [919, "Sep 2023"],
    [1065.7, "Nov 2023"],
  ] as const;
  const ys = [
    [529, "4K"],
    [625, "3K"],
    [720.6, "2K"],
    [816, "1K"],
    [911.7, "0K"],
  ] as const;
  const Handle = ({ x, y }: { x: number; y: number }) => (
    <circle cx={x} cy={y} r="6.500" fill="#fff" stroke="#555" strokeWidth="2" />
  );
  return (
    <svg viewBox="100 514 1130 466" className="w-[1130px] h-[466px] shrink-0" fontSize="12" fill="#fff">
      {ys.map(([y]) => (
        <line key={y} x1="179" x2="1218" y1={y} y2={y} stroke="#8a8a8a" strokeDasharray="2 5" />
      ))}
      {xs.map(([x]) => (
        <line key={x} x1={x} x2={x} y1="529" y2="912" stroke="#8a8a8a" strokeDasharray="2 5" />
      ))}
      <polygon points={area(silk)} fill="#0d3a36" />
      <polygon points={area(gala)} fill="#12303f" />
      <polyline points={str(gala)} fill="none" stroke="#2b7090" strokeWidth="3" strokeLinejoin="round" />
      <polyline points={str(silk)} fill="none" stroke="#178a7d" strokeWidth="3" strokeLinejoin="round" />
      <polyline points={str(materium)} fill="none" stroke="#a59090" strokeWidth="2.500" strokeLinejoin="round" />
      <polyline points={str(etime)} fill="none" stroke="#b183ad" strokeWidth="2" strokeLinejoin="round" />
      <path d="M1147 912a5 5 0 0 1 11 0Z" fill="#f3a98a" />
      {ys.map(([y, t]) => (
        <text key={t} x="154" y={y + 3.5}>
          {t}
        </text>
      ))}
      {xs.map(([x, t]) => (
        <text key={t} x={x} y="928" textAnchor="middle">
          {t}
        </text>
      ))}
      <line x1="133" x2="133" y1="529" y2="912" stroke="#666" strokeWidth="3.500" />
      <Handle x={133} y={526} />
      <Handle x={133} y={912} />
      <line x1="190" x2="1209" y1="946.5" y2="946.5" stroke="#666" strokeWidth="3.500" />
      <Handle x={190.5} y={946.5} />
      <Handle x={1209} y={946.5} />
      <text transform="translate(120 718) rotate(-90)" textAnchor="middle" fontSize="14">
        Transactions
      </text>
      <text x="699" y="973" textAnchor="middle" fontSize="15">
        Year
      </text>
    </svg>
  );
};

const App: React.FC = () => {
  return (
    <div className="w-[1920px] h-[1040px] flex flex-col overflow-hidden bg-black font-['Noto_Sans',sans-serif] text-[11.5px] text-[#252423]">
      {/* Title bar */}
      <div className="h-[34px] shrink-0 bg-[#3b3a39] flex items-center text-white text-[12px] relative">
        <svg viewBox="0 0 16 16" className="w-[16px] h-[16px] ml-[17px]" fill="none" stroke="#d2d0ce">
          <path d="M1.500 1.500h11l2 2v11h-13Z M4.500 1.500v4h7v-4M4.500 14.500v-5h7v5" />
        </svg>
        <svg viewBox="0 0 16 16" className="w-[16px] h-[16px] ml-[14px]" fill="none" stroke="#797775">
          <path d="M3 2v5h5M3 7c3-4 11-3 10 3-1 3-3 4-5 5" />
        </svg>
        <svg viewBox="0 0 16 16" className="w-[16px] h-[16px] ml-[14px]" fill="none" stroke="#797775">
          <path d="M13 2v5H8M13 7c-3-4-11-3-10 3 1 3 3 4 5 5" />
        </svg>
        <span className="ml-[9px] whitespace-nowrap text-[11.5px]">assets • Last saved: 3/21/2024 at 1:16 PM</span>
        <span className="ml-[6px] w-0 h-0 border-l-[4px] border-r-[4px] border-t-[4px] border-l-transparent border-r-transparent border-t-white mb-[4px]" />
        <div className="absolute left-[801px] top-[5px] w-[400px] h-[24px] bg-[#d3d3d0] rounded-[2px] flex items-center pl-[19px] text-[#35594f] text-[13px]">
          <Search className="w-[15px] h-[15px] -scale-x-100 text-[#3b3a39]" strokeWidth={1.2} />
          <span className="ml-[11px]">Search</span>
        </div>
        <div className="ml-auto flex items-center">
          <span className="whitespace-nowrap text-[11.5px]">Fausto Huezo Ponce</span>
          <svg viewBox="0 0 20 20" className="w-[20px] h-[20px] ml-[10px]">
            <circle cx="10" cy="10" r="10" fill="#fff" />
            <circle cx="10" cy="6.500" r="3" fill="none" stroke="#3b3a39" />
            <path d="M3.500 10.500h13c0 8-13 8-13 0Z" fill="none" stroke="#3b3a39" />
          </svg>
          <Minus className="w-[12px] h-[12px] ml-[28px] text-white" strokeWidth={1} />
          <svg viewBox="0 0 12 12" className="w-[11px] h-[11px] ml-[35px]" fill="none" stroke="#fff">
            <path d="M.500 3.500h8v8h-8ZM3 3V.500h8.500V9H9" />
          </svg>
          <X className="w-[14px] h-[14px] ml-[31px] mr-[15px] text-white" strokeWidth={1} />
        </div>
      </div>

      {/* Ribbon */}
      <div className="h-[126px] shrink-0 bg-[#fafafa] flex flex-col relative">
        <div className="h-[34px] shrink-0 flex items-start pr-[6px] text-[13px] text-[#252423]">
          {ribbonTabs.map(([t, w]) => (
            <div key={t} className={`${w} flex justify-center`}>
              <span className={`h-[23px] mt-[6px] leading-[20px] ${t === "Home" ? "border-b-[3px] border-[#117865]" : ""}`}>
                {t}
              </span>
            </div>
          ))}
          <div className="ml-auto mt-[4px] w-[84px] h-[24px] bg-[#117865] rounded-[3px] flex items-center pl-[7px] text-white text-[12.5px]">
            <svg viewBox="0 0 16 16" className="w-[16px] h-[16px]" fill="none" stroke="#fff">
              <path d="M1 4.500v10h10M1 14l2-1M7 10c0-4 2-6 5-6V1.500L15.500 6 12 10V7.500C10 7.500 8 8 7 10Z" />
            </svg>
            <span className="ml-[7px]">Share</span>
            <ChevronDown className="w-[12px] h-[12px] ml-[5px]" strokeWidth={1.5} />
          </div>
        </div>
        <div className="h-[92px] shrink-0 flex">
          <Group width="w-[160px]" pad="pl-[10px] gap-[4px]" label="Clipboard">
            <div className="w-[36px] flex flex-col items-center pt-[8px] text-[#bdbbb9]">
              <Ic32 faded>
                <path d="M4 7h13v21H4Z" fill="#fbe3c8" stroke="#ea9a4a" />
                <path d="M8 7V4h5v3" stroke="#ea9a4a" />
                <rect x="12.500" y="13.500" width="13" height="17" fill="#fff" />
              </Ic32>
              <div className="mt-[2px] leading-[16px]">Paste</div>
            </div>
            <div className="pt-[3px] text-[#bdbbb9] whitespace-nowrap">
              <div className="h-[24px] flex items-center gap-[6px] pl-[2px]">
                <svg viewBox="0 0 14 14" className="w-[14px] h-[14px]" fill="none" stroke="#7fb2dc">
                  <path d="M4 1l5 9M10 1l-5 9" />
                  <circle cx="3.500" cy="11.500" r="1.700" />
                  <circle cx="10.500" cy="11.500" r="1.700" />
                </svg>
                Cut
              </div>
              <div className="h-[24px] flex items-center gap-[6px] pl-[2px]">
                <svg viewBox="0 0 14 14" className="w-[14px] h-[14px]" fill="none" stroke="#a19f9d">
                  <path d="M1 1h6v10H1ZM5 3.500h5l3 3v7H5Z" fill="#fff" />
                </svg>
                Copy
              </div>
              <div className="h-[24px] flex items-center gap-[5px] pl-[2px]">
                <svg viewBox="0 0 16 16" className="w-[15px] h-[15px]" fill="#f0b27a" stroke="#a19f9d" strokeWidth="0.700">
                  <path d="M1 11l4-3 4 4-3 3c-2 1-4 0-5-4ZM6 7l6-6 3 3-6 6Z" />
                </svg>
                Format painter
              </div>
            </div>
          </Group>
          <Group width="w-[370px]" pad="pl-[5px]" label="Data">
            <RibbonBtn w="w-[48px]" icon={<GetDataIcon />} lines={["Get", "data"]} caret />
            <RibbonBtn w="w-[50px]" icon={<ExcelIcon />} lines={["Excel", "workbook"]} />
            <RibbonBtn w="w-[68px]" icon={<OneLakeIcon />} lines={["OneLake", "data hub"]} caret />
            <RibbonBtn w="w-[36px]" icon={<SqlIcon />} lines={["SQL", "Server"]} />
            <RibbonBtn w="w-[44px]" icon={<EnterIcon />} lines={["Enter", "data"]} />
            <RibbonBtn w="w-[53px]" icon={<DataverseIcon />} lines={["Dataverse"]} />
            <RibbonBtn w="w-[57px]" icon={<RecentIcon />} lines={["Recent", "sources"]} caret />
          </Group>
          <Group width="w-[117px]" pad="pl-[11px]" label="Queries">
            <RibbonBtn w="w-[51px]" icon={<TransformIcon />} lines={["Transform", "data"]} caret />
            <RibbonBtn w="w-[50px]" icon={<RefreshIcon />} lines={["Refresh"]} />
          </Group>
          <Group width="w-[147px]" pad="pl-[9px]" label="Insert">
            <RibbonBtn w="w-[39px]" icon={<NewVisualIcon />} lines={["New", "visual"]} />
            <RibbonBtn w="w-[41px]" icon={<TextBoxIcon />} lines={["Text", "box"]} />
            <RibbonBtn w="w-[46px]" icon={<MoreVisualsIcon />} lines={["More", "visuals"]} caret />
          </Group>
          <Group width="w-[115px]" pad="pl-[10px]" label="Calculations">
            <RibbonBtn w="w-[48px]" icon={<NewMeasureIcon />} lines={["New", "measure"]} />
            <RibbonBtn w="w-[50px]" icon={<QuickMeasureIcon />} lines={["Quick", "measure"]} />
          </Group>
          <Group width="w-[74px]" pad="pl-[7px]" label="Sensitivity">
            <RibbonBtn w="w-[60px]" icon={<SensitivityIcon />} lines={["Sensitivity", "⌄"]} muted />
          </Group>
          <Group width="w-[60px]" pad="pl-[5px]" label="Share">
            <RibbonBtn w="w-[50px]" icon={<PublishIcon />} lines={["Publish"]} />
          </Group>
          <Group width="w-[59px]" pad="pl-[5px]" label="Copilot">
            <RibbonBtn w="w-[50px]" icon={<CopilotIcon />} lines={["Copilot"]} />
          </Group>
        </div>
        <ChevronUp className="absolute right-[4px] bottom-[4px] w-[12px] h-[12px] text-[#252423]" strokeWidth={3} />
      </div>

      {/* Body */}
      <div className="h-[855px] shrink-0 flex">
        <div className="w-[41px] shrink-0 bg-[#f3f2f1] flex flex-col relative">
          <div className="absolute left-0 top-0 w-[3px] h-[40px] bg-[#117865]" />
          <div className="h-[40px] flex items-center justify-center">
            <svg viewBox="0 0 16 16" className="w-[16px] h-[16px]" fill="none" stroke="#252423">
              <path d="M1.500 1v14h14M4.500 13V6h2v7M8.500 13V8h2v5M12.500 13V3h2v10" />
            </svg>
          </div>
          <div className="h-[40px] flex items-center justify-center">
            <svg viewBox="0 0 16 16" className="w-[16px] h-[16px]" fill="none" stroke="#797775">
              <path d="M.500 1.500h15v13H.500ZM.500 5.500h15M.500 10h15M5.500 1.500v13M10.500 1.500v13" />
            </svg>
          </div>
          <div className="h-[40px] flex items-center justify-center">
            <svg viewBox="0 0 18 18" className="w-[18px] h-[18px]" fill="none" stroke="#797775">
              <path d="M.500 6.500h6v6h-6ZM9.500 1.500h8v5h-8ZM9.500 11.500h8v5h-8ZM6.500 9.500h3M9.500 4v10" />
            </svg>
          </div>
          <div className="h-[40px] flex flex-col items-center justify-center relative">
            <svg viewBox="0 0 18 18" className="w-[18px] h-[18px]" fill="none" stroke="#797775">
              <path d="M4.500 10V1.500h7l3 3V10M11.500 1.500v3h3M4.500 16.500h10" />
            </svg>
            <span className="absolute top-[18px] text-[6px] leading-[8px] text-[#605e5c]">DAX</span>
          </div>
        </div>

        <div className="w-[1484px] shrink-0 flex flex-col">
          {/* Report canvas */}
          <div className="h-[820px] shrink-0 bg-black flex overflow-hidden text-white">
            <div className="w-[59px] shrink-0 bg-gradient-to-r from-black from-80% to-[#777]" />
            <div className="w-[1366px] shrink-0 flex">
              <div className="w-[1130px] shrink-0 flex flex-col">
                <div className="h-[332px] shrink-0 flex">
                  <div className="w-[558px] shrink-0 flex pt-[30px] font-['Roboto',sans-serif]">
                    {[
                      ["214.98K", "Transactions", "w-[184px]"],
                      ["11.10K", "Wallets", "w-[186px]"],
                      ["321.92M", "Quantity", "w-[188px]"],
                    ].map(([n, l, w]) => (
                      <div key={l} className={`${w} flex flex-col items-center`}>
                        <div className="text-[31px] leading-[40px]">{n}</div>
                        <div className="mt-[2px] text-[15.5px] leading-[22px]">{l}</div>
                      </div>
                    ))}
                  </div>
                  <div className="w-[572px] shrink-0 flex flex-col">
                    <div className="h-[22px] pl-[84px] text-[17px] leading-[22px] whitespace-nowrap">
                      Transactions by Collection
                    </div>
                    <div className="flex">
                      <DonutChart />
                      <div className="pt-[76px] text-[12.5px]">
                        <div className="font-bold h-[18px] leading-[20px] pl-[2px]">Collection</div>
                        {legend.map(([t, c]) => (
                          <div key={t} className="h-[27.500px] flex items-center gap-[3px] pl-[2px] whitespace-nowrap">
                            <span className={`w-[11px] h-[11px] rounded-full ${c}`} />
                            {t}
                          </div>
                        ))}
                      </div>
                    </div>
                  </div>
                </div>
                <div className="h-[22px] pl-[5px] text-[17px] leading-[22px] whitespace-nowrap">
                  Transactions by Year, Month, Day and Collection
                </div>
                <TrendChart />
              </div>

              <div className="w-[236px] shrink-0 pl-[16px] text-[15px]">
                <div className="mt-[4px] h-[22px] pl-[8px] flex items-center pr-[12px] justify-between text-[14px]">
                  <span>Coin</span>
                  <ChevronDown className="w-[16px] h-[16px] -mt-[3px]" strokeWidth={1.2} />
                </div>
                <div className="mt-[6px] ml-[6px] w-[203px] h-[26px] border border-[#d2d0ce] flex items-center justify-between pl-[6px] pr-[5px] text-[12.5px]">
                  <span>All</span>
                  <ChevronDown className="w-[17px] h-[17px]" strokeWidth={1.2} />
                </div>
                <div className="mt-[30px] flex flex-col gap-[21.250px]">
                  {cards.map(([t, v]) => (
                    <div key={t} className="h-[64px] border-l-2 border-[#8f8f99] pl-[12px] whitespace-nowrap">
                      <div className="text-[#20607e] leading-[22px] text-[14px]">{t}</div>
                      <div className="mt-[2px] leading-[22px]">{v}</div>
                      <div className="leading-[18px]">Transactions</div>
                    </div>
                  ))}
                </div>
              </div>
            </div>
            <div className="flex-1 bg-gradient-to-r from-[#777] to-black to-20%" />
          </div>

          {/* Page tabs */}
          <div className="h-[35px] shrink-0 bg-white flex border-b border-[#d2d0ce]">
            <div className="w-[127px] shrink-0 bg-[#f3f2f1] border-l border-[#e1dfdd] flex items-center relative">
              <svg viewBox="0 0 20 20" className="w-[20px] h-[20px] ml-[10px]" fill="none" stroke="#3b3a39">
                <path d="M1.500 2.500h17v12h-17ZM10 14.500v3M6 17.500h8" />
              </svg>
              <div className="absolute left-[10px] bottom-[5px] w-[24px] h-[3px] rounded-full bg-[#117865]" />
              <svg viewBox="0 0 14 24" className="w-[12px] h-[22px] ml-[29px]" fill="none" stroke="#3b3a39">
                <rect x="1" y="1" width="12" height="22" rx="1.500" />
                <circle cx="7" cy="20" r="0.800" fill="#3b3a39" />
              </svg>
              <span className="ml-[22px] w-0 h-0 border-y-[4px] border-r-[4px] border-y-transparent border-r-[#c8c6c4]" />
              <span className="ml-[16px] w-0 h-0 border-y-[4px] border-l-[4px] border-y-transparent border-l-[#c8c6c4]" />
            </div>
            {tabs.map(([t, w]) => (
              <div
                key={t}
                className={`${w} shrink-0 flex items-center justify-center border-r border-l-0 border-[#d2d0ce] text-[11.5px] relative ${t === "NFTCollections" ? "border-l" : ""}`}
              >
                {t}
                {t === "Coins" && <div className="absolute left-0 right-0 bottom-0 h-[4px] bg-[#117865]" />}
              </div>
            ))}
            <div className="w-[39px] shrink-0 bg-[#117865] flex items-center justify-center">
              <Plus className="w-[14px] h-[14px] text-white" strokeWidth={3.5} />
            </div>
          </div>
        </div>

        {/* Filters pane */}
        <div className="w-[34px] shrink-0 bg-[#dfe0eb] flex flex-col items-center text-[#252423]">
          <ChevronsLeft className="mt-[9px] w-[20px] h-[20px]" strokeWidth={1.2} />
          <svg viewBox="0 0 14 14" className="mt-[10px] w-[13px] h-[13px]" fill="none" stroke="#252423">
            <path d="M13 1v12L7.500 8H1.500v-2h6Z" />
          </svg>
          <span className="mt-[7px] text-[15px] font-medium [writing-mode:vertical-rl] leading-[16px]">Filters</span>
        </div>

        {/* Visualizations pane */}
        <div className="w-[180px] shrink-0 bg-[#f3f2f1] border-r border-[#e1dfdd] flex flex-col">
          <div className="h-[38px] shrink-0 flex items-center justify-between pl-[8px] pr-[5px] pt-[1px] text-[15.5px] text-[#252423]">
            <span>Visualizations</span>
            <ChevronsRight className="w-[20px] h-[20px]" strokeWidth={1.2} />
          </div>
          <div className="h-[16px] pl-[8px] leading-[16px] text-[11.5px] font-medium text-[#3b1f1f]">Build visual</div>
          <div className="mt-[3px] h-[32px] pl-[8px] flex items-center">
            <div className="w-[32px] h-[32px] bg-[#d2d0ce] flex items-center justify-center">
              <svg viewBox="0 0 24 24" className="w-[24px] h-[24px]">
                <path d="M0 1h16" stroke="#3b3a39" />
                <rect x="1" y="5" width="22" height="7" fill="#117865" stroke="#252423" strokeDasharray="1 1" />
                <rect x="1" y="14" width="22" height="7" fill="#117865" stroke="#252423" strokeDasharray="1 1" />
              </svg>
            </div>
            <svg viewBox="0 0 26 26" className="ml-[34px] w-[26px] h-[26px]" fill="none" stroke="#252423">
              <path d="M14 24H2V1h12l6 7v3M14 1v7h6" />
              <path d="M25 12L15 21l-2-1 10-9Z M13 20c-2 0-3 2-4 4 3 0 6-1 6-3" />
            </svg>
          </div>
          <div className="mt-[12px] h-[1px] bg-[#8a8886] relative shrink-0">
            <div className="absolute left-[16px] -top-[5px] w-[10px] h-[10px] rotate-45 bg-[#f3f2f1] border-l border-t border-[#8a8886]" />
          </div>
          <div className="mt-[5px] pl-[6px] grid grid-cols-[repeat(6,28px)] auto-rows-[28px]">
            {gallery.map((g, i) => (
              <div key={i} className="flex items-center justify-center">
                {g}
              </div>
            ))}
          </div>
          <div className="mt-[3px] mx-[6px] border-t border-dashed border-[#d2d0ce]" />
          <div className="mt-[2px] pl-[6px] flex h-[28px]">
            <div className="w-[28px] flex items-center justify-center">
              <S>
                <rect x="1" y="1" width="4" height="18" fill="#71afe5" stroke="none" />
                <rect x="15" y="1" width="4" height="10" fill="#f2a13a" stroke="none" />
                <rect x="15" y="12" width="4" height="7" fill="#d65532" stroke="none" />
                <path d="M5 4c5 0 5 12 10 12M5 15c5 0 5-10 10-10" stroke="#8a8886" strokeWidth="1.500" />
              </S>
            </div>
            <div className="w-[28px] flex items-center justify-center">
              <S>
                <circle cx="9" cy="9" r="7" fill="#fff" strokeWidth="1.400" />
                <path d="M14 14l5 5" strokeWidth="1.600" />
                <path d="M6 13l3-8 3 8M7 10h4" stroke="#0f6cbd" />
              </S>
            </div>
          </div>
          <div className="mt-[3px] h-[1px] bg-[#e1dfdd]" />
          <div className="mt-[8px] pl-[12px] h-[17px] leading-[17px] text-[#3b3a39]">Values</div>
          <div className="mt-[6px] h-[27px] flex flex-col">
            <Dashed pl="pl-[10px] h-[27px]">Add data fields here</Dashed>
          </div>
          <div className="mt-[11px] pl-[12px] h-[16px] leading-[16px] font-medium text-[#484644]">Drill through</div>
          <div className="mt-[9px] pl-[12px] pr-[22px] h-[16px] flex items-center justify-between text-[#3b3a39]">
            Cross-report
            <div className="w-[32px] h-[16px] rounded-full border border-[#8a8886] bg-white flex items-center pl-[4px] gap-[2px] text-[9px] text-[#605e5c]">
              <span className="w-[8px] h-[8px] rounded-full bg-[#605e5c]" />
              Off
            </div>
          </div>
          <div className="mt-[11px] pl-[12px] pr-[22px] h-[16px] flex items-center justify-between text-[#3b3a39]">
            Keep all filters
            <div className="w-[32px] h-[16px] rounded-full bg-[#117865] flex items-center justify-end pr-[4px] gap-[2px] text-[9px] text-white">
              On
              <span className="w-[8px] h-[8px] rounded-full bg-white" />
            </div>
          </div>
          <div className="mt-[11px] h-[25px] flex flex-col">
            <Dashed pl="pl-[8px] h-[25px]">Add drill-through fields here</Dashed>
          </div>
        </div>

        {/* Data pane */}
        <div className="flex-1 bg-[#f3f2f1] flex flex-col">
          <div className="h-[38px] shrink-0 flex items-center justify-between pl-[9px] pr-[5px] pt-[1px] text-[15.5px] text-[#252423]">
            <span>Data</span>
            <ChevronsRight className="w-[20px] h-[20px]" strokeWidth={1.2} />
          </div>
          <div className="mt-[8px] mx-[4px] h-[27px] border border-[#605e5c] rounded-[2px] flex items-center pl-[7px] text-[12.5px] text-[#605e5c]">
            <Search className="w-[15px] h-[15px] -scale-x-100" strokeWidth={1} />
            <span className="ml-[7px]">Search</span>
          </div>
          <div className="mt-[8px] flex flex-col">
            {fields.map((f) => (
              <div key={f} className="h-[24px] flex items-center pl-[13px] text-[11.5px] text-[#3b3a39]">
                <ChevronRight className="w-[14px] h-[18px] text-[#605e5c]" strokeWidth={1} />
                <svg viewBox="0 0 12 12" className="ml-[3px] w-[12px] h-[12px]" fill="none" stroke="#252423">
                  <rect x=".5" y=".5" width="11" height="11" rx="2.500" />
                  <path d="M4 .5v11M8 .5v11M.5 4h11M.5 8h11" />
                </svg>
                <span className="ml-[5px] whitespace-nowrap">{f}</span>
              </div>
            ))}
          </div>
        </div>
      </div>

      {/* Status bar */}
      <div className="h-[25px] shrink-0 bg-[#f3f2f1] flex items-center pl-[5px] text-[11.5px] text-[#605e5c] border-b border-black">
        <span>Page 2 of 6</span>
        <div className="ml-auto flex items-center text-[#605e5c]">
          <Minus className="w-[10px] h-[10px]" />
          <div className="ml-[6px] w-[99px] h-[1px] bg-[#605e5c] relative">
            <div className="absolute left-[52px] -top-[6px] w-[3px] h-[12px] bg-[#605e5c]" />
          </div>
          <Plus className="ml-[6px] w-[10px] h-[10px]" />
          <span className="ml-[15px]">114%</span>
          <svg viewBox="0 0 14 14" className="ml-[15px] mr-[18px] w-[13px] h-[13px]" fill="none" stroke="#605e5c">
            <path d="M.500 4V.500H4M10 .500h3.500V4M13.500 10v3.500H10M4 13.500H.500V10" />
          </svg>
        </div>
      </div>
    </div>
  );
};

export default App;
